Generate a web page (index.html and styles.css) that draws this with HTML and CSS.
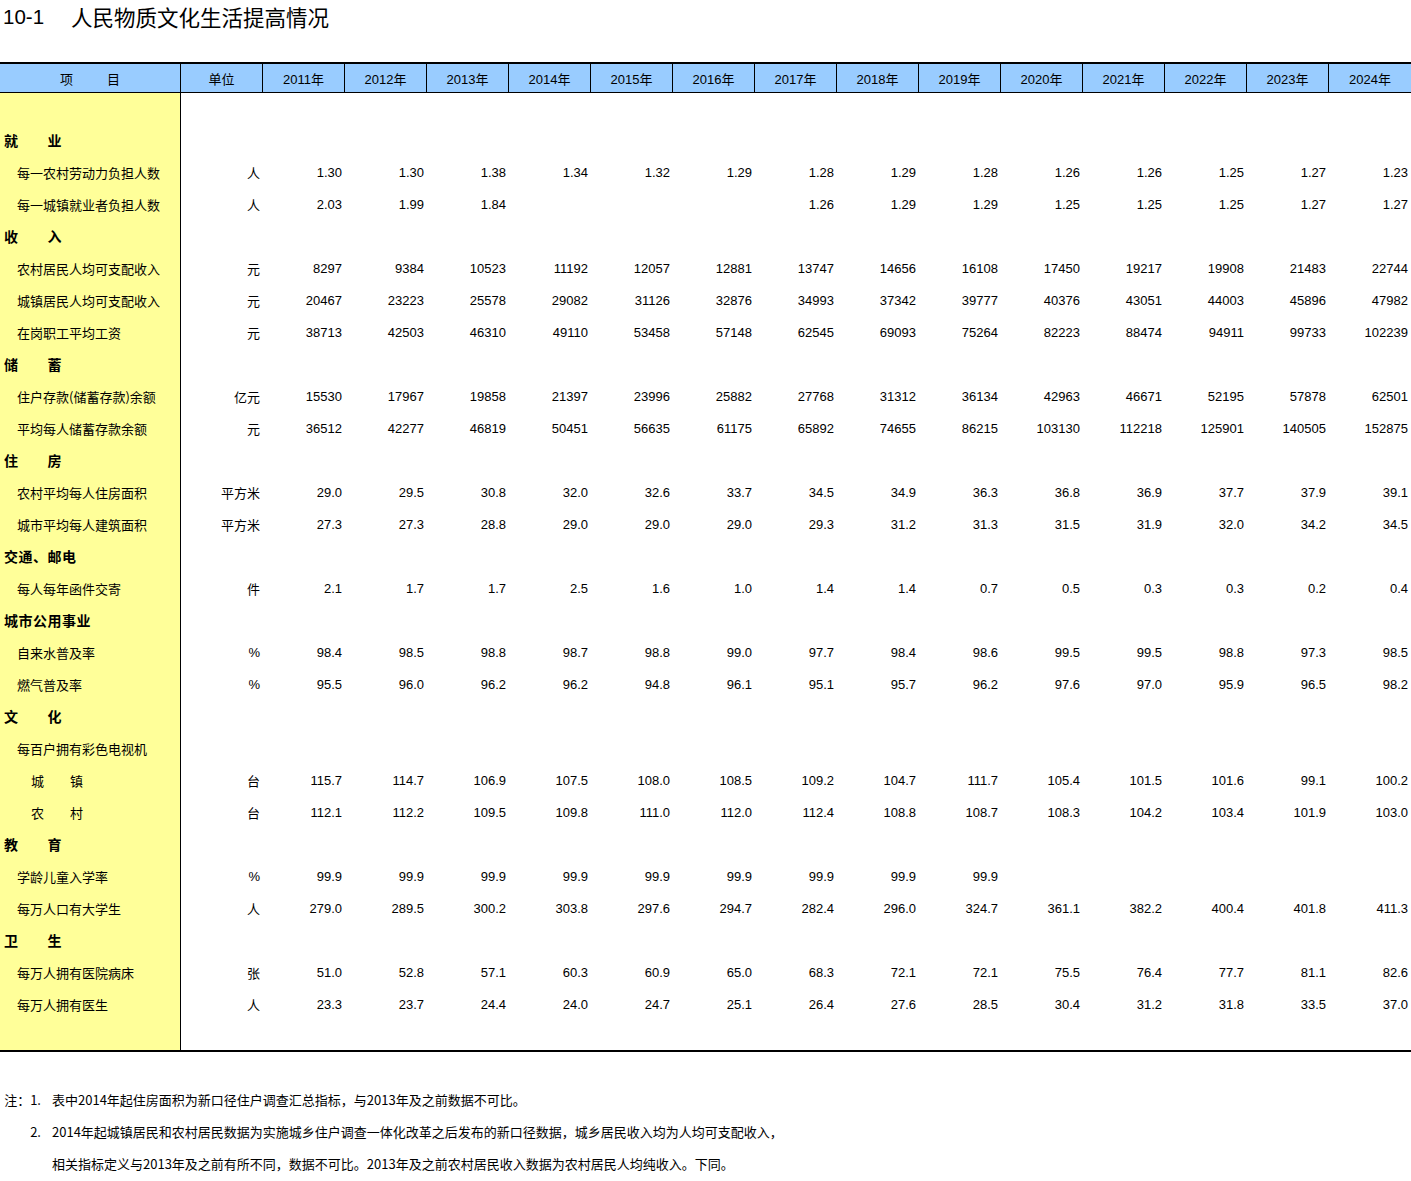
FILE: index.html
```html
<!DOCTYPE html>
<html lang="zh-CN">
<head>
<meta charset="utf-8">
<title>10-1 人民物质文化生活提高情况</title>
<link rel="stylesheet" href="styles.css">
</head>
<body>
<div class="page">
  <h1 class="title"><span class="t-num">10-1</span><span class="t-name">人民物质文化生活提高情况</span></h1>

  <div class="sheet">
    <div class="hdr">
      <div class="h item-h"><span>项</span><span class="gap"></span><span>目</span></div>
      <div class="h">单位</div>
      <div class="h">2011年</div>
      <div class="h">2012年</div>
      <div class="h">2013年</div>
      <div class="h">2014年</div>
      <div class="h">2015年</div>
      <div class="h">2016年</div>
      <div class="h">2017年</div>
      <div class="h">2018年</div>
      <div class="h">2019年</div>
      <div class="h">2020年</div>
      <div class="h">2021年</div>
      <div class="h">2022年</div>
      <div class="h">2023年</div>
      <div class="h last">2024年</div>
    </div>

    <div class="body">
      <div class="row first"><div class="item"></div></div>

      <div class="row"><div class="item sec">就　　业</div></div>
      <div class="row"><div class="item sub">每一农村劳动力负担人数</div><div class="unit">人</div><div class="v">1.30</div><div class="v">1.30</div><div class="v">1.38</div><div class="v">1.34</div><div class="v">1.32</div><div class="v">1.29</div><div class="v">1.28</div><div class="v">1.29</div><div class="v">1.28</div><div class="v">1.26</div><div class="v">1.26</div><div class="v">1.25</div><div class="v">1.27</div><div class="v">1.23</div></div>
      <div class="row"><div class="item sub">每一城镇就业者负担人数</div><div class="unit">人</div><div class="v">2.03</div><div class="v">1.99</div><div class="v">1.84</div><div class="v"></div><div class="v"></div><div class="v"></div><div class="v">1.26</div><div class="v">1.29</div><div class="v">1.29</div><div class="v">1.25</div><div class="v">1.25</div><div class="v">1.25</div><div class="v">1.27</div><div class="v">1.27</div></div>

      <div class="row"><div class="item sec">收　　入</div></div>
      <div class="row"><div class="item sub">农村居民人均可支配收入</div><div class="unit">元</div><div class="v">8297</div><div class="v">9384</div><div class="v">10523</div><div class="v">11192</div><div class="v">12057</div><div class="v">12881</div><div class="v">13747</div><div class="v">14656</div><div class="v">16108</div><div class="v">17450</div><div class="v">19217</div><div class="v">19908</div><div class="v">21483</div><div class="v">22744</div></div>
      <div class="row"><div class="item sub">城镇居民人均可支配收入</div><div class="unit">元</div><div class="v">20467</div><div class="v">23223</div><div class="v">25578</div><div class="v">29082</div><div class="v">31126</div><div class="v">32876</div><div class="v">34993</div><div class="v">37342</div><div class="v">39777</div><div class="v">40376</div><div class="v">43051</div><div class="v">44003</div><div class="v">45896</div><div class="v">47982</div></div>
      <div class="row"><div class="item sub">在岗职工平均工资</div><div class="unit">元</div><div class="v">38713</div><div class="v">42503</div><div class="v">46310</div><div class="v">49110</div><div class="v">53458</div><div class="v">57148</div><div class="v">62545</div><div class="v">69093</div><div class="v">75264</div><div class="v">82223</div><div class="v">88474</div><div class="v">94911</div><div class="v">99733</div><div class="v">102239</div></div>

      <div class="row"><div class="item sec">储　　蓄</div></div>
      <div class="row"><div class="item sub">住户存款(储蓄存款)余额</div><div class="unit">亿元</div><div class="v">15530</div><div class="v">17967</div><div class="v">19858</div><div class="v">21397</div><div class="v">23996</div><div class="v">25882</div><div class="v">27768</div><div class="v">31312</div><div class="v">36134</div><div class="v">42963</div><div class="v">46671</div><div class="v">52195</div><div class="v">57878</div><div class="v">62501</div></div>
      <div class="row"><div class="item sub">平均每人储蓄存款余额</div><div class="unit">元</div><div class="v">36512</div><div class="v">42277</div><div class="v">46819</div><div class="v">50451</div><div class="v">56635</div><div class="v">61175</div><div class="v">65892</div><div class="v">74655</div><div class="v">86215</div><div class="v">103130</div><div class="v">112218</div><div class="v">125901</div><div class="v">140505</div><div class="v">152875</div></div>

      <div class="row"><div class="item sec">住　　房</div></div>
      <div class="row"><div class="item sub">农村平均每人住房面积</div><div class="unit">平方米</div><div class="v">29.0</div><div class="v">29.5</div><div class="v">30.8</div><div class="v">32.0</div><div class="v">32.6</div><div class="v">33.7</div><div class="v">34.5</div><div class="v">34.9</div><div class="v">36.3</div><div class="v">36.8</div><div class="v">36.9</div><div class="v">37.7</div><div class="v">37.9</div><div class="v">39.1</div></div>
      <div class="row"><div class="item sub">城市平均每人建筑面积</div><div class="unit">平方米</div><div class="v">27.3</div><div class="v">27.3</div><div class="v">28.8</div><div class="v">29.0</div><div class="v">29.0</div><div class="v">29.0</div><div class="v">29.3</div><div class="v">31.2</div><div class="v">31.3</div><div class="v">31.5</div><div class="v">31.9</div><div class="v">32.0</div><div class="v">34.2</div><div class="v">34.5</div></div>

      <div class="row"><div class="item sec">交通、邮电</div></div>
      <div class="row"><div class="item sub">每人每年函件交寄</div><div class="unit">件</div><div class="v">2.1</div><div class="v">1.7</div><div class="v">1.7</div><div class="v">2.5</div><div class="v">1.6</div><div class="v">1.0</div><div class="v">1.4</div><div class="v">1.4</div><div class="v">0.7</div><div class="v">0.5</div><div class="v">0.3</div><div class="v">0.3</div><div class="v">0.2</div><div class="v">0.4</div></div>

      <div class="row"><div class="item sec">城市公用事业</div></div>
      <div class="row"><div class="item sub">自来水普及率</div><div class="unit">%</div><div class="v">98.4</div><div class="v">98.5</div><div class="v">98.8</div><div class="v">98.7</div><div class="v">98.8</div><div class="v">99.0</div><div class="v">97.7</div><div class="v">98.4</div><div class="v">98.6</div><div class="v">99.5</div><div class="v">99.5</div><div class="v">98.8</div><div class="v">97.3</div><div class="v">98.5</div></div>
      <div class="row"><div class="item sub">燃气普及率</div><div class="unit">%</div><div class="v">95.5</div><div class="v">96.0</div><div class="v">96.2</div><div class="v">96.2</div><div class="v">94.8</div><div class="v">96.1</div><div class="v">95.1</div><div class="v">95.7</div><div class="v">96.2</div><div class="v">97.6</div><div class="v">97.0</div><div class="v">95.9</div><div class="v">96.5</div><div class="v">98.2</div></div>

      <div class="row"><div class="item sec">文　　化</div></div>
      <div class="row"><div class="item sub">每百户拥有彩色电视机</div></div>
      <div class="row"><div class="item sub2">城　　镇</div><div class="unit">台</div><div class="v">115.7</div><div class="v">114.7</div><div class="v">106.9</div><div class="v">107.5</div><div class="v">108.0</div><div class="v">108.5</div><div class="v">109.2</div><div class="v">104.7</div><div class="v">111.7</div><div class="v">105.4</div><div class="v">101.5</div><div class="v">101.6</div><div class="v">99.1</div><div class="v">100.2</div></div>
      <div class="row"><div class="item sub2">农　　村</div><div class="unit">台</div><div class="v">112.1</div><div class="v">112.2</div><div class="v">109.5</div><div class="v">109.8</div><div class="v">111.0</div><div class="v">112.0</div><div class="v">112.4</div><div class="v">108.8</div><div class="v">108.7</div><div class="v">108.3</div><div class="v">104.2</div><div class="v">103.4</div><div class="v">101.9</div><div class="v">103.0</div></div>

      <div class="row"><div class="item sec">教　　育</div></div>
      <div class="row"><div class="item sub">学龄儿童入学率</div><div class="unit">%</div><div class="v">99.9</div><div class="v">99.9</div><div class="v">99.9</div><div class="v">99.9</div><div class="v">99.9</div><div class="v">99.9</div><div class="v">99.9</div><div class="v">99.9</div><div class="v">99.9</div><div class="v"></div><div class="v"></div><div class="v"></div><div class="v"></div><div class="v"></div></div>
      <div class="row"><div class="item sub">每万人口有大学生</div><div class="unit">人</div><div class="v">279.0</div><div class="v">289.5</div><div class="v">300.2</div><div class="v">303.8</div><div class="v">297.6</div><div class="v">294.7</div><div class="v">282.4</div><div class="v">296.0</div><div class="v">324.7</div><div class="v">361.1</div><div class="v">382.2</div><div class="v">400.4</div><div class="v">401.8</div><div class="v">411.3</div></div>

      <div class="row"><div class="item sec">卫　　生</div></div>
      <div class="row"><div class="item sub">每万人拥有医院病床</div><div class="unit">张</div><div class="v">51.0</div><div class="v">52.8</div><div class="v">57.1</div><div class="v">60.3</div><div class="v">60.9</div><div class="v">65.0</div><div class="v">68.3</div><div class="v">72.1</div><div class="v">72.1</div><div class="v">75.5</div><div class="v">76.4</div><div class="v">77.7</div><div class="v">81.1</div><div class="v">82.6</div></div>
      <div class="row"><div class="item sub">每万人拥有医生</div><div class="unit">人</div><div class="v">23.3</div><div class="v">23.7</div><div class="v">24.4</div><div class="v">24.0</div><div class="v">24.7</div><div class="v">25.1</div><div class="v">26.4</div><div class="v">27.6</div><div class="v">28.5</div><div class="v">30.4</div><div class="v">31.2</div><div class="v">31.8</div><div class="v">33.5</div><div class="v">37.0</div></div>

      <div class="row end"><div class="item"></div></div>
    </div>
  </div>

  <div class="notes">
    <div class="note"><span class="pfx">注：1.</span><span class="txt">表中2014年起住房面积为新口径住户调查汇总指标，与2013年及之前数据不可比。</span></div>
    <div class="note"><span class="pfx">2.</span><span class="txt">2014年起城镇居民和农村居民数据为实施城乡住户调查一体化改革之后发布的新口径数据，城乡居民收入均为人均可支配收入，</span></div>
    <div class="note"><span class="pfx"></span><span class="txt">相关指标定义与2013年及之前有所不同，数据不可比。2013年及之前农村居民收入数据为农村居民人均纯收入。下同。</span></div>
  </div>
</div>
</body>
</html>
```

FILE: styles.css
```css
html, body {
  margin: 0;
  padding: 0;
  background: #ffffff;
}

body {
  width: 1411px;
  color: #000000;
  font-family: "Noto Sans CJK SC", sans-serif;
}

.title {
  margin: 0;
  height: 34px;
  line-height: 34px;
  padding-left: 3px;
  display: flex;
  font-weight: normal;
  font-size: 20.5px;
  font-family: "Liberation Sans", "Noto Sans CJK SC", sans-serif;
}

.t-name {
  margin-left: 27px;
  font-family: "Noto Sans CJK SC", sans-serif;
  font-size: 21.5px;
}

.sheet {
  margin-top: 28px;
  width: 1411px;
}

.hdr {
  display: grid;
  grid-template-columns: 181px repeat(15, 82px);
  height: 28px;
  border-top: 2px solid #000000;
  border-bottom: 1px solid #000000;
  background: #99ccff;
}

.h {
  box-sizing: border-box;
  border-right: 1px solid #000000;
  display: flex;
  align-items: center;
  justify-content: center;
  font-size: 13px;
  font-family: "Liberation Sans", "Noto Sans CJK SC", sans-serif;
}

.h.last {
  border-right: none;
}

.item-h .gap {
  display: inline-block;
  width: 34px;
}

.body {
  border-bottom: 2px solid #000000;
}

.row {
  display: grid;
  grid-template-columns: 181px repeat(15, 82px);
  height: 32px;
}

.row.first {
  height: 31px;
}

.row.end {
  height: 30px;
}

.item {
  box-sizing: border-box;
  background: #ffff99;
  border-right: 1px solid #000000;
  padding-left: 4px;
  display: flex;
  align-items: center;
  font-size: 13px;
  white-space: nowrap;
  height: 100%;
}

.item.sec {
  font-weight: bold;
  font-size: 14px;
  letter-spacing: 0.5px;
}

.item.sub {
  padding-left: 17px;
}

.item.sub2 {
  padding-left: 31px;
}

.unit {
  display: flex;
  align-items: center;
  justify-content: flex-end;
  padding-right: 3px;
  font-size: 13px;
  font-family: "Liberation Sans", "Noto Sans CJK SC", sans-serif;
}

.v {
  display: flex;
  align-items: center;
  justify-content: flex-end;
  padding-right: 3px;
  font-size: 13px;
  font-family: "Liberation Sans", Arial, sans-serif;
}

.notes {
  margin-top: 32px;
}

.note {
  display: flex;
  height: 32px;
  line-height: 32px;
  font-size: 13px;
  white-space: nowrap;
}

.note .pfx {
  box-sizing: border-box;
  width: 52px;
  padding-right: 11px;
  text-align: right;
  flex: none;
}
```
